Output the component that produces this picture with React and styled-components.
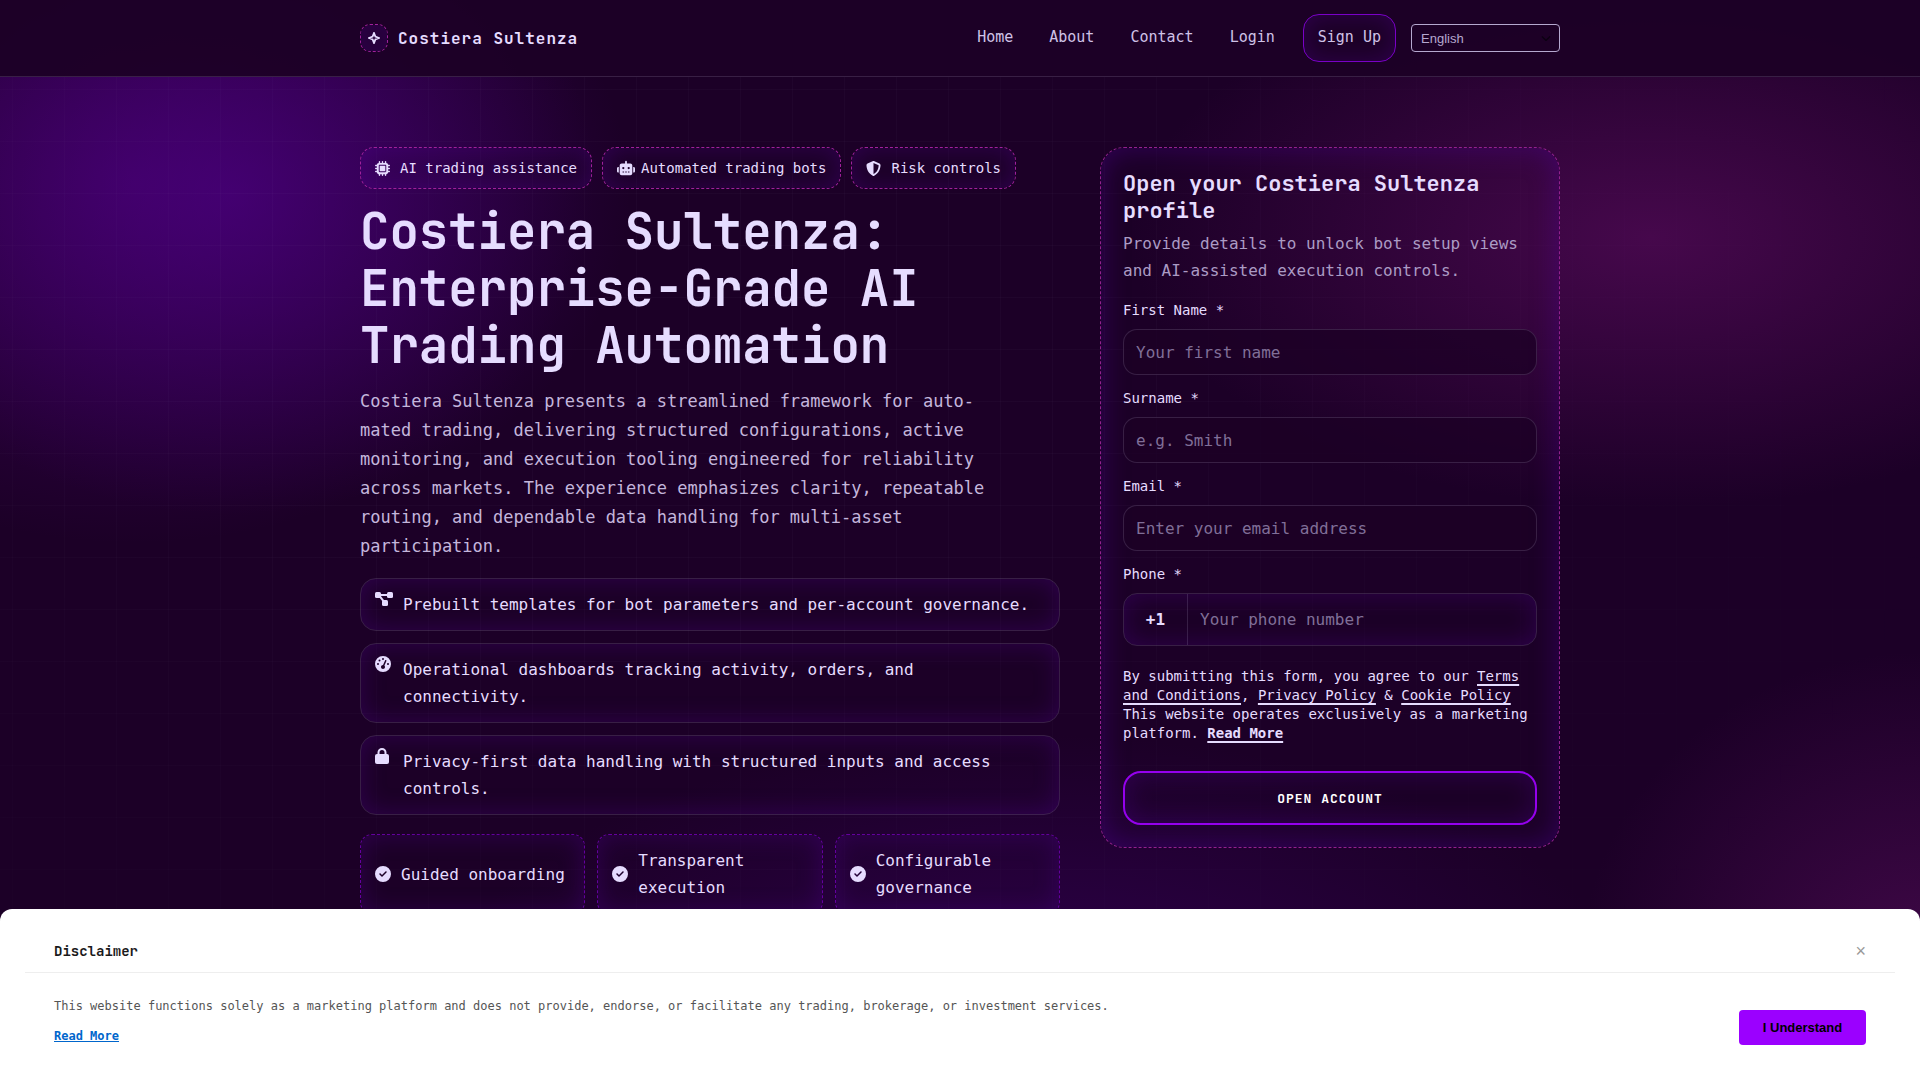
import React from "react";
import styled, { createGlobalStyle } from "styled-components";
import { FaMicrochip, FaRobot, FaGaugeHigh, FaCircleCheck, FaShieldHalved, FaChevronDown } from "react-icons/fa6";

const mono = '"DejaVu Sans Mono", "Liberation Mono", monospace';
const display = '"JetBrains Mono", "DejaVu Sans Mono", monospace';
const sans = '"Liberation Sans", Arial, sans-serif';
const ink = "#e6dcff";
const line = "rgba(230, 220, 255, 0.14)";
const glow = "inset 0 0 24px rgba(96, 0, 180, 0.28)";

const GlobalStyle = createGlobalStyle`
  *, *::before, *::after { box-sizing: border-box; }
  body {
    margin: 0;
    min-height: 100vh;
    overflow: hidden;
    color: ${ink};
    font-family: ${mono};
    font-size: 16px;
    line-height: 27px;
    background:
      radial-gradient(ellipse 400px 320px at 12% 18%, rgba(84, 0, 150, 0.5), rgba(84, 0, 150, 0)),
      radial-gradient(ellipse 460px 360px at 7% 17%, rgba(84, 0, 130, 0.5), rgba(84, 0, 130, 0)),
      radial-gradient(ellipse 520px 270px at 86% 22%, #46084c, rgba(70, 8, 76, 0)),
      radial-gradient(ellipse 340px 320px at 100% 90%, #400848, rgba(64, 8, 72, 0)),
      radial-gradient(ellipse 600px 280px at 54% 94%, #2e004c, rgba(46, 0, 76, 0)),
      #1c0027;
  }
  a { color: inherit; }
  h1, h2, p, ul { margin: 0; padding: 0; }
`;

const Header = styled.header`
  border-bottom: 1px solid ${line};
  background: rgba(28, 0, 38, 0.95);
`;
const Container = styled.div`
  max-width: 1200px;
  margin: 0 auto;
`;
const HeaderRow = styled(Container)`
  display: flex;
  align-items: center;
  justify-content: space-between;
  padding: 14px 0;
`;
const Brand = styled.a`
  display: flex;
  align-items: center;
  gap: 10px;
  font: 700 16px/27px ${display};
  letter-spacing: 1px;
  text-decoration: none;
`;
const BrandMark = styled.span`
  display: grid;
  place-items: center;
  width: 28px;
  height: 28px;
  border: 1px dashed #a0219c;
  border-radius: 10px;
  box-shadow: ${glow};
`;
const Nav = styled.nav`
  display: flex;
  align-items: center;
  gap: 15px;
`;
const NavLinks = styled.div`
  display: flex;
  align-items: center;
  gap: 8px;
`;
const NavLink = styled.a`
  padding: 10px 14px 12px;
  font-size: 15px;
  line-height: 26px;
  color: #cfc2e6;
  text-decoration: none;
`;
const SignUp = styled(NavLink)`
  margin-left: 6px;
  padding: 9px 14px 11px;
  border: 1px solid #7a00c8;
  border-radius: 16px;
  box-shadow: ${glow};
`;
const LanguageBox = styled.div`
  position: relative;
  display: flex;
  color: #0c0012;

  svg {
    position: absolute;
    top: 9px;
    right: 9px;
    pointer-events: none;
  }
`;
const Language = styled.select`
  appearance: none;
  width: 149px;
  height: 28px;
  padding: 0 9px;
  border: 1px solid #b5a8cf;
  border-radius: 4px;
  background: transparent;
  color: #b5a8cf;
  font: 13px ${sans};
`;

const Hero = styled.main`
  position: relative;
  isolation: isolate;
  padding: 70px 0 96px;

  &::before {
    content: "";
    position: absolute;
    inset: 0;
    z-index: -1;
    background-image:
      linear-gradient(to right, rgba(230, 220, 255, 0.025) 1px, transparent 1px),
      linear-gradient(to bottom, rgba(230, 220, 255, 0.025) 1px, transparent 1px);
    background-size: 52px 52px;
    background-position: 12px 12px;
    mask-image: radial-gradient(ellipse 75% 100% at 35% 30%, #000 30%, transparent 95%);
  }
`;
const HeroGrid = styled(Container)`
  display: grid;
  grid-template-columns: 700fr 460fr;
  gap: 40px;
  align-items: start;
`;
const Intro = styled.section`
  display: flex;
  flex-direction: column;
`;
const Chips = styled.ul`
  display: flex;
  gap: 10px;
  list-style: none;
`;
const Chip = styled.li`
  display: flex;
  align-items: center;
  gap: ${(p) => (p.$tight ? 6 : 10)}px;
  padding: 8px 14px;
  border: 1px dashed #a0219c;
  border-radius: 14px;
  box-shadow: ${glow};
  font-size: 14px;
  line-height: 24px;
`;
const Title = styled.h1`
  margin-top: 14px;
  font: 700 49px/57px ${display};
`;
const Lead = styled.p`
  max-width: 640px;
  margin-top: 13px;
  color: #c4b6dc;
  font-size: 17px;
  line-height: 29px;
`;
const Features = styled.ul`
  display: grid;
  gap: 12px;
  margin-top: 17px;
  list-style: none;
`;
const Feature = styled.li`
  display: grid;
  grid-template-columns: 18px 1fr;
  gap: 10px;
  padding: 12px 14px;
  border: 1px solid ${line};
  border-radius: 16px;
  box-shadow: ${glow};

  svg { justify-self: start; }
`;
const Points = styled.ul`
  display: grid;
  grid-template-columns: repeat(3, 1fr);
  gap: 12px;
  margin-top: 19px;
  list-style: none;
`;
const Point = styled.li`
  display: flex;
  align-items: center;
  gap: 10px;
  padding: 12px 14px;
  border: 1px dashed #64009f;
  border-radius: 12px;
  box-shadow: ${glow};

  svg { flex: none; }
`;

const Card = styled.form`
  padding: 22px;
  border: 1px dashed #93218f;
  border-radius: 24px;
  box-shadow: inset 0 0 28px rgba(90, 0, 180, 0.36);
`;
const CardTitle = styled.h2`
  font: 700 22px/27px ${display};
`;
const CardText = styled.p`
  margin: 6px 0 14px;
  color: #ab9bc4;
`;
const Field = styled.div`
  display: flex;
  flex-direction: column;
  gap: 7px;
  margin-bottom: 11px;
`;
const Label = styled.label`
  font-size: 14px;
  line-height: 24px;
`;
const Input = styled.input`
  width: 100%;
  height: 46px;
  padding: 0 12px;
  border: 1px solid ${line};
  border-radius: 14px;
  background: rgba(28, 0, 38, 0.75);
  color: ${ink};
  font: 16px ${mono};

  &::placeholder { color: #806f98; opacity: 1; }
`;
const PhoneRow = styled.div`
  display: flex;
  height: 53px;
  border: 1px solid ${line};
  border-radius: 14px;
  box-shadow: ${glow};
  overflow: hidden;
`;
const Prefix = styled.span`
  display: grid;
  place-items: center;
  flex: 0 0 64px;
  border-right: 1px solid ${line};
  font-weight: 700;
`;
const PhoneInput = styled(Input)`
  height: 100%;
  border: 0;
  border-radius: 0;
  background: transparent;
`;
const Legal = styled.p`
  margin: 21px 0 28px;
  font-size: 14px;
  line-height: 19px;
`;
const LegalLink = styled.a`
  font-weight: ${(p) => (p.$strong ? 700 : 400)};
  text-decoration: underline 2px;
  text-decoration-skip-ink: none;
  text-underline-offset: 3px;
`;
const Submit = styled.button`
  width: 100%;
  height: 54px;
  border: 2px solid #9500ee;
  border-radius: 18px;
  background: transparent;
  box-shadow: ${glow};
  color: #fff;
  font: 700 13px ${display};
  letter-spacing: 1px;
  text-transform: uppercase;
`;

const Notice = styled.aside`
  position: fixed;
  inset: auto 0 0;
  z-index: 1;
  padding: 24px 25px 35px;
  border-radius: 12px 12px 0 0;
  background: #fff;
  color: #555;
  font-size: 12px;
  line-height: 18px;
`;
const NoticeHead = styled.div`
  display: flex;
  align-items: center;
  justify-content: space-between;
  height: 40px;
  padding: 0 29px 4px;
  border-bottom: 1px solid #eee;
`;
const NoticeTitle = styled.h2`
  color: #1a1a1a;
  font: 700 14px/20px ${display};
`;
const Close = styled.button`
  padding: 0;
  border: 0;
  background: none;
  color: #999;
  font: 18px/20px ${sans};
`;
const NoticeBody = styled.div`
  display: flex;
  align-items: flex-end;
  justify-content: space-between;
  padding: 24px 29px 0;
`;
const NoticeText = styled.div`
  display: grid;
  gap: 12px;

  a { color: #0066cc; font-weight: 700; }
`;
const Accept = styled.button`
  width: 127px;
  height: 35px;
  border: 0;
  border-radius: 4px;
  background: #9b00ff;
  color: #000;
  font: 700 13px ${sans};
`;

const FlowIcon = () => (
  <svg width="18" height="16" viewBox="0 0 576 512" fill="currentColor">
    <rect x="0" y="32" width="192" height="192" rx="48" />
    <rect x="384" y="32" width="192" height="192" rx="48" />
    <rect x="224" y="288" width="192" height="192" rx="48" />
    <path d="M150 96H426V160H150Z" />
    <path d="M130 190 182 152 310 322 258 360Z" />
  </svg>
);

const LockIcon = () => (
  <svg width="14" height="16" viewBox="0 0 448 512">
    <rect y="192" width="448" height="320" rx="64" fill="currentColor" />
    <path d="M112 224V144a112 112 0 0 1 224 0v80" fill="none" stroke="currentColor" strokeWidth="64" />
  </svg>
);

const fields = [
  { id: "first", label: "First Name *", hint: "Your first name", type: "text" },
  { id: "last", label: "Surname *", hint: "e.g. Smith", type: "text" },
  { id: "email", label: "Email *", hint: "Enter your email address", type: "email" },
];

export default function App() {
  return (
    <>
      <GlobalStyle />
      <Header>
        <HeaderRow>
          <Brand href="#">
            <BrandMark>
              <svg width="12" height="12" viewBox="0 0 12 12" fill="none" stroke={ink} strokeWidth="1.8">
                <path d="M6 1 7.4 4.6 11 6 7.4 7.4 6 11 4.6 7.4 1 6 4.6 4.6Z" />
              </svg>
            </BrandMark>
            Costiera Sultenza
          </Brand>
          <Nav>
            <NavLinks>
              <NavLink href="#">Home</NavLink>
              <NavLink href="#">About</NavLink>
              <NavLink href="#">Contact</NavLink>
              <NavLink href="#">Login</NavLink>
              <SignUp href="#">Sign Up</SignUp>
            </NavLinks>
            <LanguageBox>
              <Language aria-label="Language">
                <option>English</option>
              </Language>
              <FaChevronDown size={10} />
            </LanguageBox>
          </Nav>
        </HeaderRow>
      </Header>

      <Hero>
        <HeroGrid>
          <Intro>
            <Chips>
              <Chip><FaMicrochip size={15} />AI trading assistance</Chip>
              <Chip $tight><FaRobot size={18} />Automated trading bots</Chip>
              <Chip><FaShieldHalved size={15} />Risk controls</Chip>
            </Chips>
            <Title>Costiera Sultenza: Enterprise-Grade AI Trading Automation</Title>
            <Lead>
              Costiera Sultenza presents a streamlined framework for auto&shy;mated trading, delivering
              structured configurations, active monitoring, and execution tooling engineered for
              reliability across markets. The experience emphasizes clarity, repeatable routing, and
              dependable data handling for multi-asset participation.
            </Lead>
            <Features>
              <Feature><FlowIcon /><span>Prebuilt templates for bot parameters and per-account governance.</span></Feature>
              <Feature><FaGaugeHigh /><span>Operational dashboards tracking activity, orders, and connectivity.</span></Feature>
              <Feature><LockIcon /><span>Privacy-first data handling with structured inputs and access controls.</span></Feature>
            </Features>
            <Points>
              <Point><FaCircleCheck />Guided onboarding</Point>
              <Point><FaCircleCheck />Transparent execution</Point>
              <Point><FaCircleCheck />Configurable governance</Point>
            </Points>
          </Intro>

          <Card>
            <CardTitle>Open your Costiera Sultenza profile</CardTitle>
            <CardText>Provide details to unlock bot setup views and AI-assisted execution controls.</CardText>
            {fields.map((f) => (
              <Field key={f.id}>
                <Label htmlFor={f.id}>{f.label}</Label>
                <Input id={f.id} type={f.type} placeholder={f.hint} />
              </Field>
            ))}
            <Field>
              <Label htmlFor="phone">Phone *</Label>
              <PhoneRow>
                <Prefix>+1</Prefix>
                <PhoneInput id="phone" type="tel" placeholder="Your phone number" />
              </PhoneRow>
            </Field>
            <Legal>
              By submitting this form, you agree to our <LegalLink href="#">Terms and Conditions</LegalLink>,{" "}
              <LegalLink href="#">Privacy Policy</LegalLink> &amp; <LegalLink href="#">Cookie Policy</LegalLink>
              <br />
              This website operates exclusively as a marketing platform.{" "}
              <LegalLink href="#" $strong>Read More</LegalLink>
            </Legal>
            <Submit type="button">Open account</Submit>
          </Card>
        </HeroGrid>
      </Hero>

      <Notice>
        <NoticeHead>
          <NoticeTitle>Disclaimer</NoticeTitle>
          <Close type="button" aria-label="Close">×</Close>
        </NoticeHead>
        <NoticeBody>
          <NoticeText>
            <p>
              This website functions solely as a marketing platform and does not provide, endorse, or
              facilitate any trading, brokerage, or investment services.
            </p>
            <p><a href="#">Read More</a></p>
          </NoticeText>
          <Accept type="button">I Understand</Accept>
        </NoticeBody>
      </Notice>
    </>
  );
}
